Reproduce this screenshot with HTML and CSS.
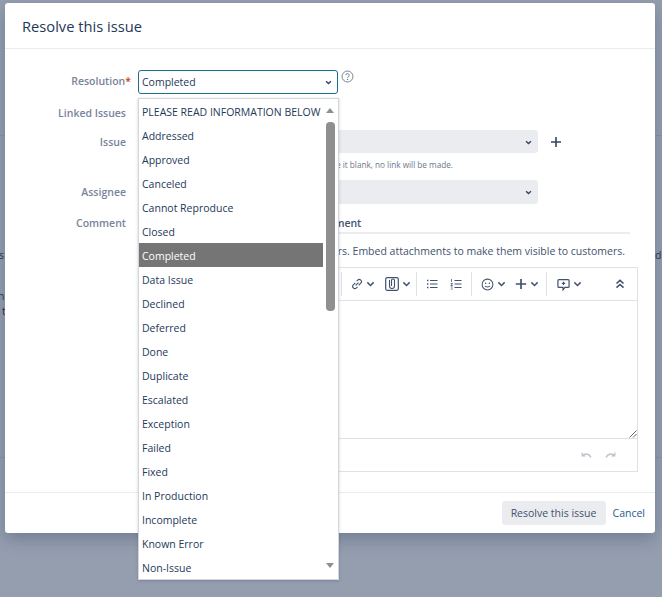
FILE: index.html
```html
<!DOCTYPE html>
<html lang="en">
<head>
<meta charset="utf-8">
<title>Resolve this issue</title>
<link rel="stylesheet" href="styles.css">
</head>
<body>
<div class="page-line page-line-a"></div>
<div class="page-line page-line-b"></div>
<span class="bg-text bg-e">es</span>
<span class="bg-text bg-h">h</span>
<span class="bg-text bg-t">t</span>
<span class="bg-text bg-d">d</span>

<div class="dialog">
  <header class="dialog-head"><h2>Resolve this issue</h2></header>
  <form class="dialog-body">
    <div class="row row-resolution">
      <label class="label">Resolution<span class="req">*</span></label>
      <div class="select focused"><span class="value">Completed</span>
        <svg class="chev" viewBox="0 0 10 6"><path d="M1.5 1.2 5 4.6l3.500-3.400" fill="none" stroke="#344563" stroke-width="2"/></svg>
      </div>
      <svg class="help" viewBox="0 0 14 14"><circle cx="7" cy="7" r="5.9" fill="none" stroke="#6b778c" stroke-width="1"/><path d="M5.2 5.6a1.8 1.8 0 1 1 2.6 1.6c-.6.3-.8.6-.8 1.2" fill="none" stroke="#6b778c"/><circle cx="7" cy="10.2" r=".7" fill="#6b778c"/></svg>
    </div>
    <div class="row row-linked"><label class="label">Linked Issues</label></div>
    <div class="row row-issue">
      <label class="label">Issue</label>
      <div class="select wide">
        <svg class="chev" viewBox="0 0 10 6"><path d="M1.5 1.2 5 4.6l3.500-3.400" fill="none" stroke="#344563" stroke-width="2"/></svg>
      </div>
      <svg class="plus" viewBox="0 0 12 12"><path d="M6 1v10M1 6h10" stroke="#344563" stroke-width="1.6"/></svg>
    </div>
    <div class="hint">If you leave it blank, no link will be made.</div>
    <div class="row row-assignee">
      <label class="label">Assignee</label>
      <div class="select wide">
        <svg class="chev" viewBox="0 0 10 6"><path d="M1.5 1.2 5 4.6l3.500-3.400" fill="none" stroke="#344563" stroke-width="2"/></svg>
      </div>
    </div>
    <div class="row row-comment">
      <label class="label comment-label">Comment</label>
      <div class="tabs">Add comment</div>
    </div>
    <p class="notice">Attachments aren't sent to customers. Embed attachments to make them visible to customers.</p>
    <div class="editor">
      <div class="toolbar">
        <span class="tool-sep"></span>
        <span class="tool t-link">
          <svg class="ico12" viewBox="0 0 14 14"><path d="M5.4 8.6 8.7 5.3M6.6 3.7l1.2-1.2a2.4 2.4 0 0 1 3.6 3.6L9 8.5M7.6 10.3l-1.3 1.3a2.4 2.4 0 0 1-3.6-3.6L5 5.600" fill="none" stroke="#42526e" stroke-width="1.3"/></svg>
          <svg class="tchev" viewBox="0 0 10 6"><path d="M1.500 1.200 5 4.600l3.500-3.400" fill="none" stroke="#42526e" stroke-width="1.600"/></svg>
        </span>
        <span class="tool t-att">
          <svg class="ico14" viewBox="0 0 14 14"><rect x=".7" y=".7" width="12.600" height="12.600" rx="1.500" fill="none" stroke="#42526e" stroke-width="1.200"/><path d="M4.500 3v6a2.500 2.500 0 0 0 5 0V3.500a1.500 1.500 0 0 0-3 0V9" fill="none" stroke="#42526e" stroke-width="1.100"/></svg>
          <svg class="tchev" viewBox="0 0 10 6"><path d="M1.500 1.200 5 4.600l3.500-3.400" fill="none" stroke="#42526e" stroke-width="1.600"/></svg>
        </span>
        <span class="tool-sep s2"></span>
        <span class="tool t-ul">
          <svg class="ico12" viewBox="0 0 12 12"><path d="M4 2.500h7.500M4 6h7.500M4 9.500h7.500" stroke="#42526e" stroke-width="1.200"/><path d="M1 2.500h1.400M1 6h1.400M1 9.500h1.400" stroke="#42526e" stroke-width="1.400"/></svg>
        </span>
        <span class="tool t-ol">
          <svg class="ico12" viewBox="0 0 12 12"><path d="M4.500 2.500h7M4.500 6h7M4.500 9.500h7" stroke="#42526e" stroke-width="1.200"/><path d="M1.500 1v3M.7 5.500h2L.8 7.500h2M.8 9h1.900M.8 11h1.900" stroke="#42526e" stroke-width=".8" fill="none"/></svg>
        </span>
        <span class="tool-sep s3"></span>
        <span class="tool t-smile">
          <svg class="ico13" viewBox="0 0 14 14"><circle cx="7" cy="7" r="5.800" fill="none" stroke="#42526e" stroke-width="1.100"/><circle cx="5" cy="5.600" r=".8" fill="#42526e"/><circle cx="9" cy="5.600" r=".8" fill="#42526e"/><path d="M4.300 8.500c.8 1.600 4.600 1.600 5.400 0" fill="none" stroke="#42526e" stroke-width="1.100"/></svg>
          <svg class="tchev" viewBox="0 0 10 6"><path d="M1.500 1.200 5 4.600l3.500-3.400" fill="none" stroke="#42526e" stroke-width="1.600"/></svg>
        </span>
        <span class="tool t-plus">
          <svg class="ico12" viewBox="0 0 12 12"><path d="M6 1v10M.8 6h10.400" stroke="#42526e" stroke-width="1.700"/></svg>
          <svg class="tchev" viewBox="0 0 10 6"><path d="M1.500 1.200 5 4.600l3.500-3.400" fill="none" stroke="#42526e" stroke-width="1.600"/></svg>
        </span>
        <span class="tool-sep s4"></span>
        <span class="tool t-cmt">
          <svg class="ico13" viewBox="0 0 14 14"><path d="M2 1.800h10a1 1 0 0 1 1 1v6.400a1 1 0 0 1-1 1H8.600L6.500 12.800V10.200H2a1 1 0 0 1-1-1V2.800a1 1 0 0 1 1-1z" fill="none" stroke="#42526e" stroke-width="1.300"/><path d="M7 4v3.600M5.200 5.800h3.600" stroke="#42526e" stroke-width="1.200"/></svg>
          <svg class="tchev" viewBox="0 0 10 6"><path d="M1.500 1.200 5 4.600l3.500-3.400" fill="none" stroke="#42526e" stroke-width="1.600"/></svg>
        </span>
        <span class="tool t-collapse">
          <svg class="ico10" viewBox="0 0 10 10"><path d="M1.500 4.500 5 1.300l3.500 3.200M1.500 8.700 5 5.500l3.500 3.200" fill="none" stroke="#42526e" stroke-width="1.600"/></svg>
        </span>
      </div>
      <div class="edit-area">
        <svg class="grip" viewBox="0 0 8 8"><path d="M.5 7.500l7-7M4 7.500l3.500-3.500" stroke="#666" stroke-width="1"/></svg>
      </div>
      <div class="edit-foot">
        <svg class="undo" viewBox="0 0 14 10"><path d="M1.500 1v5h5" fill="#c1c7d0"/><path d="M2.500 5.500c2.500-3 7-3 9.500 1.500" fill="none" stroke="#c1c7d0" stroke-width="1.800"/></svg>
        <svg class="redo" viewBox="0 0 14 10"><path d="M12.500 1v5h-5" fill="#c1c7d0"/><path d="M11.500 5.500c-2.500-3-7-3-9.500 1.500" fill="none" stroke="#c1c7d0" stroke-width="1.800"/></svg>
      </div>
    </div>
  </form>
  <footer class="dialog-foot">
    <button type="button" class="btn">Resolve this issue</button>
    <a class="cancel">Cancel</a>
  </footer>
</div>

<div class="dropdown">
  <ul class="options">
    <li>PLEASE READ INFORMATION BELOW</li>
    <li>Addressed</li>
    <li>Approved</li>
    <li>Canceled</li>
    <li>Cannot Reproduce</li>
    <li>Closed</li>
    <li class="selected">Completed</li>
    <li>Data Issue</li>
    <li>Declined</li>
    <li>Deferred</li>
    <li>Done</li>
    <li>Duplicate</li>
    <li>Escalated</li>
    <li>Exception</li>
    <li>Failed</li>
    <li>Fixed</li>
    <li>In Production</li>
    <li>Incomplete</li>
    <li>Known Error</li>
    <li>Non-Issue</li>
  </ul>
  <div class="scrollbar">
    <span class="arrow-up"></span>
    <span class="thumb"></span>
    <span class="arrow-down"></span>
  </div>
</div>
</body>
</html>
```

FILE: styles.css
```css
* { box-sizing: border-box; }
html, body { margin: 0; height: 100%; }
body {
  background: #959eaf;
  font-family: "Open Sans", "Noto Sans", sans-serif;
  font-size: 10.5px;
  color: #253858;
  overflow: hidden;
  position: relative;
}
.page-line { position: absolute; height: 1px; background: #8a93a5; }
.page-line-a { left: 0; right: 0; top: 135px; }
.page-line-b { left: 0; right: 0; top: 457px; }
.bg-text { position: absolute; color: #2a3550; }
.bg-e { left: -7px; top: 248px; }
.bg-h { left: -2px; top: 289px; }
.bg-t { left: 2px; top: 304px; }
.bg-d { left: 655px; top: 248px; }

.dialog {
  position: absolute;
  left: 5px;
  top: 3px;
  width: 650px;
  height: 530px;
  background: #fff;
  border-radius: 3px;
  box-shadow: 0 6px 16px rgba(9, 30, 66, .25);
  display: flex;
  flex-direction: column;
}
.dialog-head {
  height: 46px;
  border-bottom: 1px solid #ebecf0;
  padding-left: 17px;
  display: flex;
  align-items: center;
  flex: none;
}
.dialog-head h2 { margin: 0; font-size: 14.7px; font-weight: 400; color: #253858; }
.dialog-body { flex: 1; padding-top: 21px; min-height: 0; }
.row { display: flex; align-items: center; }
.label {
  width: 121px;
  margin-right: 12px;
  text-align: right;
  color: #78849a;
  font-weight: 600;
  flex: none;
}
.req { color: #de350b; margin-right: -5px; }
.row-resolution { height: 24px; align-items: flex-start; }
.row-resolution .label { line-height: 22px; }
.row-linked { height: 18px; margin-top: 10px; }
.row-issue { height: 23px; margin-top: 8px; }
.row-assignee { height: 24px; margin-top: 8px; }
.row-comment { height: 19px; margin-top: 11px; align-items: flex-start; }
.comment-label { padding-top: 1px; }
.select {
  position: relative;
  height: 100%;
  width: 200px;
  border-radius: 3px;
  padding-left: 3px;
  display: flex;
  align-items: center;
  color: #253858;
}
.select.focused { border: 1px solid #1d6f8e; }
.value { margin-top: -1px; }
.select.wide { width: 400px; background: #ebecf0; }
.chev { position: absolute; right: 6px; top: 50%; margin-top: -2px; width: 7px; height: 5px; }
.focused .chev { right: 5px; }
.help { width: 13px; height: 13px; margin-left: 3px; flex: none; }
.plus { width: 12px; height: 12px; margin-left: 12px; }
.hint {
  margin: 5px 0 0 133px;
  height: 14px;
  font-size: 8.2px;
  line-height: 14px;
  color: #6b778c;
  white-space: nowrap;
  width: 315px;
  text-align: right;
}
.tabs {
  width: 492px;
  height: 19px;
  border-bottom: 2px solid #ebecf0;
  padding-left: 152px;
  line-height: 16px;
  white-space: nowrap;
  color: #42526e;
  font-weight: 600;
}
.notice {
  margin: 9px 0 0;
  width: 620px;
  height: 16px;
  line-height: 16px;
  text-align: right;
  white-space: nowrap;
  color: #42526e;
}
.editor {
  margin: 8px 0 0 133px;
  width: 500px;
  height: 205px;
  border: 1px solid #dfe1e6;
  display: flex;
  flex-direction: column;
}
.toolbar {
  height: 33px;
  border-bottom: 1px solid #dfe1e6;
  flex: none;
  position: relative;
}
.tool-sep { position: absolute; top: 4px; width: 1px; height: 24px; background: #dfe1e6; left: 202px; }
.tool-sep.s2 { left: 277px; }
.tool-sep.s3 { left: 332px; }
.tool-sep.s4 { left: 407px; }
.tool { position: absolute; top: 9px; display: flex; align-items: center; gap: 3px; height: 14px; }
.t-link { left: 212px; }
.t-att { left: 246px; }
.t-ul { left: 287px; }
.t-ol { left: 311px; }
.t-smile { left: 342px; }
.t-plus { left: 376px; }
.t-cmt { left: 418px; }
.t-collapse { left: 476px; }
.ico10 { width: 10px; height: 10px; }
.ico12 { width: 12px; height: 12px; }
.ico13 { width: 13px; height: 13px; }
.ico14 { width: 14px; height: 14px; }
.tchev { width: 9px; height: 6px; }
.edit-area { height: 138px; border-bottom: 1px solid #dfe1e6; flex: none; position: relative; }
.grip { position: absolute; right: 0; bottom: 0; width: 8px; height: 8px; }
.edit-foot {
  flex: 1;
  display: flex;
  justify-content: flex-end;
  align-items: center;
  gap: 11px;
  padding: 0 20px 0 0;
}
.undo, .redo { width: 13px; height: 9px; }
.dialog-foot {
  flex: none;
  height: 41px;
  border-top: 1px solid #ebecf0;
  display: flex;
  align-items: flex-start;
  padding: 8px 10px 0 0;
  justify-content: flex-end;
  gap: 7px;
}
.btn {
  width: 104px;
  height: 24px;
  border: 0;
  border-radius: 3px;
  background: #ebecf0;
  color: #42526e;
  font: inherit;
  padding: 0;
}
.cancel { line-height: 24px; color: #1d5c8e; }

.dropdown {
  position: absolute;
  left: 138px;
  top: 98px;
  width: 201px;
  height: 482px;
  background: #fff;
  border: 1px solid #d4d6da;
  box-shadow: 0 1px 3px rgba(9, 30, 66, .2);
  overflow: hidden;
}
.options { list-style: none; margin: 0; padding: 0; width: 184px; }
.options li {
  height: 24px;
  line-height: 26px;
  padding-left: 3px;
  white-space: nowrap;
  color: #253858;
}
.options li.selected { background: #757575; color: #fff; }
.scrollbar { position: absolute; left: 187px; top: 0; bottom: 0; width: 9px; }
.arrow-up, .arrow-down, .thumb { position: absolute; left: 0; display: block; }
.arrow-up { top: 9px; border: 4.5px solid transparent; border-top: 0; border-bottom: 5px solid #8f8f8f; }
.arrow-down { bottom: 11px; border: 4.5px solid transparent; border-bottom: 0; border-top: 5px solid #8f8f8f; }
.thumb { top: 23px; width: 9px; height: 189px; border-radius: 4px; background: #8f8f8f; }
```
